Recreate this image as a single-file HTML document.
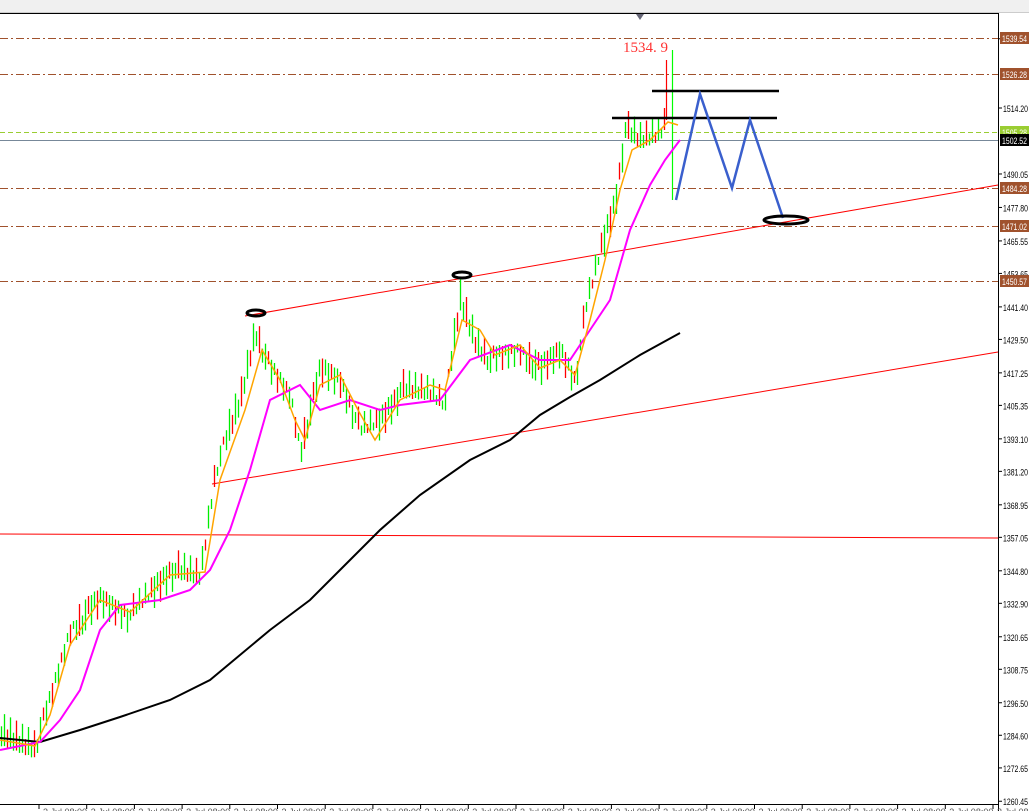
<!DOCTYPE html><html><head><style>
body{margin:0;width:1029px;height:811px;overflow:hidden;background:#fff;font-family:"Liberation Sans",sans-serif}
#tb{position:absolute;left:0;top:0;width:1029px;height:12px;background:#f0f0f0;border-bottom:1px solid #ccc}
svg{position:absolute;left:0;top:0}
</style></head><body>
<div id="tb"></div>
<svg id="s" width="1029" height="811" font-family="Liberation Sans" font-size="10">
<rect x="0" y="13" width="998" height="791" fill="#fff"/>
<line x1="0" y1="13.5" x2="998" y2="13.5" stroke="#000"/>
<line x1="998.5" y1="13" x2="998.5" y2="811" stroke="#000"/>
<line x1="0" y1="804.5" x2="998" y2="804.5" stroke="#000"/>
<polygon points="636,14 644,14 640,20" fill="#667"/>
<g stroke="#a0522d" stroke-dasharray="8,3,2,3" stroke-width="1">
<line x1="0" y1="38.5" x2="998" y2="38.5"/><line x1="0" y1="74.5" x2="998" y2="74.5"/>
<line x1="0" y1="188.5" x2="998" y2="188.5"/><line x1="0" y1="226.5" x2="998" y2="226.5"/><line x1="0" y1="281.5" x2="998" y2="281.5"/></g>
<line x1="0" y1="132.5" x2="998" y2="132.5" stroke="#9acd32" stroke-dasharray="5,3"/>
<line x1="0" y1="140.5" x2="998" y2="140.5" stroke="#778899"/>
<g stroke="#f00" stroke-width="1"><line x1="245" y1="316" x2="998" y2="185"/><line x1="212" y1="484" x2="998" y2="352"/><line x1="0" y1="534" x2="998" y2="538"/></g>
<g id="c"></g>
<line x1="672.5" y1="50" x2="672.5" y2="200" stroke="#0f0" stroke-width="1.2"/>
<line x1="666.5" y1="60" x2="666.5" y2="120" stroke="#f00" stroke-width="1.2"/>
<polyline fill="none" stroke="#000" stroke-width="2" points="0,738 40,742 80,730 120,717 170,700 210,680 240,655 270,630 310,600 340,570 380,530 420,495 470,460 510,440 540,415 570,397 600,380 640,355 680,333"/>
<polyline fill="none" stroke="#f0f" stroke-width="2" points="0,750 40,742 60,720 80,690 100,630 120,605 160,600 190,590 210,570 230,530 250,470 270,400 300,385 320,410 350,400 380,410 400,405 440,400 470,360 510,345 540,360 570,360 590,330 610,300 630,230 650,185 665,160 680,140"/>
<polyline fill="none" stroke="#ffa500" stroke-width="1.5" points="0,740 35,746 50,715 70,645 100,600 130,612 170,575 205,572 220,480 245,410 262,350 280,380 295,420 305,440 320,385 340,375 358,410 375,440 400,400 430,385 445,390 462,320 480,330 495,355 520,345 540,368 560,360 575,375 590,320 605,260 620,190 632,150 650,140 668,122 678,125"/>
<g stroke="#000" stroke-width="2.5"><line x1="652" y1="91" x2="779" y2="91"/><line x1="612" y1="118" x2="777" y2="118"/></g>
<g fill="none" stroke="#3a5fcd" stroke-width="2.5"><polyline points="676,200 700,94 732,188 750,120 783,218"/></g>
<g fill="none" stroke="#000" stroke-width="3"><ellipse cx="256" cy="313" rx="9" ry="3"/><ellipse cx="462" cy="275" rx="9" ry="3"/><ellipse cx="786" cy="220" rx="22" ry="4"/></g>
<text x="623" y="52" fill="#f33" font-family="Liberation Serif" font-size="15">1534. 9</text>
<g id="ax" font-size="10"></g>
</svg>
<script>
var s="http://www.w3.org/2000/svg",g=document.getElementById('c');
var P=[[0,735],[35,745],[50,700],[70,630],[100,600],[130,615],[170,570],[200,575],[215,470],[240,400],[255,330],[270,370],[290,395],[300,450],[320,370],[340,380],[360,430],[380,420],[400,390],[430,390],[445,400],[460,300],[475,340],[490,360],[520,350],[540,370],[560,350],[575,380],[585,310],[600,250],[615,200],[625,130],[640,140],[660,130],[672,100],[678,140]];
function yAt(x){for(var i=1;i<P.length;i++)if(x<=P[i][0]){var a=P[i-1],b=P[i];return a[1]+(b[1]-a[1])*(x-a[0])/(b[0]-a[0]);}return 140;}
var k=0;
for(var x=1;x<665;x+=3){k++;var y=yAt(x),h=8+((k*37)%25),o=y+(((k*53)%15)-7);var col=((k*7)%3==0)?'#ff0000':'#00ee00';
var l=document.createElementNS(s,'line');l.setAttribute('x1',x+.5);l.setAttribute('x2',x+.5);l.setAttribute('y1',o-h/2);l.setAttribute('y2',o+h/2);l.setAttribute('style','stroke:'+col+';stroke-width:1.3');g.appendChild(l);}
var ax=document.getElementById('ax');
function T(x,y,txt,fill){var t=document.createElementNS(s,'text');t.setAttribute('x',x);t.setAttribute('y',y);t.setAttribute('textLength',25);t.setAttribute('lengthAdjust','spacingAndGlyphs');t.setAttribute('font-size',9.5);if(fill)t.setAttribute('fill',fill);t.textContent=txt;ax.appendChild(t);}
var L=[1539.54,1514.20,1490.05,1477.80,1465.55,1453.65,1441.40,1429.50,1417.25,1405.35,1393.10,1381.20,1368.95,1357.05,1344.80,1332.90,1320.65,1308.75,1296.50,1284.60,1272.65,1260.45];
L.forEach(function(p){var y=108+(1514.2-p)*2.732;T(1003,y+4,p.toFixed(2));
var q=document.createElementNS(s,'line');q.setAttribute('x1',998);q.setAttribute('x2',1002);q.setAttribute('y1',y);q.setAttribute('y2',y);q.setAttribute('stroke','#000');ax.appendChild(q);});
[[38,'1539.54','#a0522d'],[74,'1526.28','#a0522d'],[132,'1505.28','#9acd32'],[140,'1502.52','#000'],[188,'1484.28','#a0522d'],[226,'1471.02','#a0522d'],[281,'1450.57','#a0522d']].forEach(function(b){
var rc=document.createElementNS(s,'rect');rc.setAttribute('x',1000);rc.setAttribute('y',b[0]-6);rc.setAttribute('width',29);rc.setAttribute('height',12);rc.setAttribute('fill',b[2]);ax.appendChild(rc);
T(1002,b[0]+4,b[1],'#fff');});
for(var i=0;i<21;i++){var x=39+i*47.7;if(x>998)break;var q=document.createElementNS(s,'line');q.setAttribute('x1',x);q.setAttribute('x2',x);q.setAttribute('y1',804);q.setAttribute('y2',809);q.setAttribute('stroke','#000');ax.appendChild(q);
var t=document.createElementNS(s,'text');t.setAttribute('x',x+4);t.setAttribute('y',815);t.setAttribute('font-size',9);t.setAttribute('fill','#555');t.textContent='3 Jul 08:00';ax.appendChild(t);}
</script>
</body></html>
